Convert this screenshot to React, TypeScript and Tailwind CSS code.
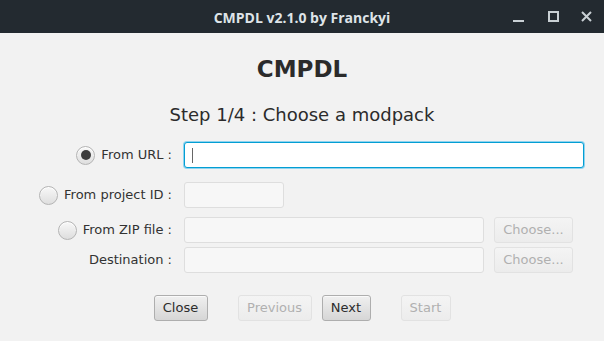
import React, { useState } from 'react';

type Source = 'url' | 'project' | 'zip';

const Radio = ({ checked, onClick }: { checked: boolean; onClick: () => void }) => (
  <button
    type="button"
    onClick={onClick}
    className="w-[19px] h-[19px] shrink-0 rounded-full border border-[#b4b4b4] bg-gradient-to-b from-[#f8f8f8] to-[#dedede] flex items-center justify-center shadow-[inset_0_1px_0_#ffffff]"
  >
    {checked && <span className="w-[10px] h-[10px] rounded-full bg-[#3d3d3d]" />}
  </button>
);

const Field = ({ width, focused }: { width: string; focused?: boolean }) =>
  focused ? (
    <div className={`${width} h-[26px] shrink-0 rounded-[3px] border border-[#039ed3] bg-white shadow-[0_0_0_1px_#8fd3ef] flex items-center pl-[7px]`}>
      <span className="w-px h-[15px] bg-[#666]" />
    </div>
  ) : (
    <div className={`${width} h-[26px] shrink-0 rounded-[3px] border border-[#dedede] bg-[#f7f7f7]`} />
  );

const Btn = ({ label, width, disabled }: { label: string; width: string; disabled?: boolean }) => (
  <button
    type="button"
    disabled={disabled}
    className={`${width} h-[26px] shrink-0 rounded-[3px] border text-[13px] flex items-center justify-center ${
      disabled
        ? 'border-[#e2e2e2] bg-gradient-to-b from-[#f4f4f4] to-[#ececec] text-[#b0b0b0]'
        : 'border-[#aeaeae] bg-gradient-to-b from-[#f0f0f0] to-[#d6d6d6] text-[#2c2c2c] shadow-[inset_0_1px_0_#fafafa]'
    }`}
  >
    {label}
  </button>
);

const App = () => {
  const [source, setSource] = useState<Source>('url');

  return (
    <div className="w-[604px] h-[341px] bg-[#f2f2f2] flex flex-col overflow-hidden font-['DejaVu_Sans',sans-serif] text-[#333]">
      {/* Title bar */}
      <div className="h-[33px] shrink-0 bg-[#232a30] flex items-center relative">
        <div className="flex-1 text-center font-['Open_Sans',sans-serif] font-bold text-[14px] text-[#dfe4e8] pt-[1px]">
          CMPDL v2.1.0 by Franckyi
        </div>
        <div className="absolute right-[12px] top-0 h-[33px] flex items-center text-[#c9d0d4]">
          <svg width="11" height="11" viewBox="0 0 11 11" className="mr-[24px]">
            <rect x="0" y="9" width="11" height="2" fill="currentColor" />
          </svg>
          <svg width="11" height="11" viewBox="0 0 11 11" className="mr-[22px]">
            <rect x="1" y="1" width="9" height="9" fill="none" stroke="currentColor" strokeWidth="2" />
          </svg>
          <svg width="11" height="11" viewBox="0 0 11 11">
            <path d="M1 1 L10 10 M10 1 L1 10" stroke="currentColor" strokeWidth="2" />
          </svg>
        </div>
      </div>

      {/* Heading */}
      <div className="mt-[22px] text-center font-bold text-[23px] leading-[28px] text-[#2b2b2b]">CMPDL</div>
      <div className="mt-[21px] text-center text-[18px] leading-[22px] text-[#2b2b2b]">Step 1/4 : Choose a modpack</div>

      {/* Form */}
      <div className="mt-[16px] flex flex-col text-[13px]">
        <div className="flex items-center">
          <div className="w-[172px] shrink-0 flex items-center justify-end gap-[6px]">
            <Radio checked={source === 'url'} onClick={() => setSource('url')} />
            <span>From URL :</span>
          </div>
          <div className="ml-[12px]">
            <Field width="w-[400px]" focused />
          </div>
        </div>

        <div className="flex items-center mt-[14px]">
          <div className="w-[172px] shrink-0 flex items-center justify-end gap-[6px]">
            <Radio checked={source === 'project'} onClick={() => setSource('project')} />
            <span>From project ID :</span>
          </div>
          <div className="ml-[12px]">
            <Field width="w-[100px]" />
          </div>
        </div>

        <div className="flex items-center mt-[9px]">
          <div className="w-[172px] shrink-0 flex items-center justify-end gap-[6px]">
            <Radio checked={source === 'zip'} onClick={() => setSource('zip')} />
            <span>From ZIP file :</span>
          </div>
          <div className="ml-[12px] flex items-center gap-[10px]">
            <Field width="w-[300px]" />
            <Btn label="Choose..." width="w-[79px]" disabled />
          </div>
        </div>

        <div className="flex items-center mt-[4px]">
          <div className="w-[172px] shrink-0 flex items-center justify-end">
            <span>Destination :</span>
          </div>
          <div className="ml-[12px] flex items-center gap-[10px]">
            <Field width="w-[300px]" />
            <Btn label="Choose..." width="w-[79px]" disabled />
          </div>
        </div>
      </div>

      {/* Navigation */}
      <div className="mt-[22px] flex justify-center">
        <Btn label="Close" width="w-[54px]" />
        <div className="ml-[30px]">
          <Btn label="Previous" width="w-[74px]" disabled />
        </div>
        <div className="ml-[10px]">
          <Btn label="Next" width="w-[49px]" />
        </div>
        <div className="ml-[30px]">
          <Btn label="Start" width="w-[50px]" disabled />
        </div>
      </div>
    </div>
  );
};

export default App;
